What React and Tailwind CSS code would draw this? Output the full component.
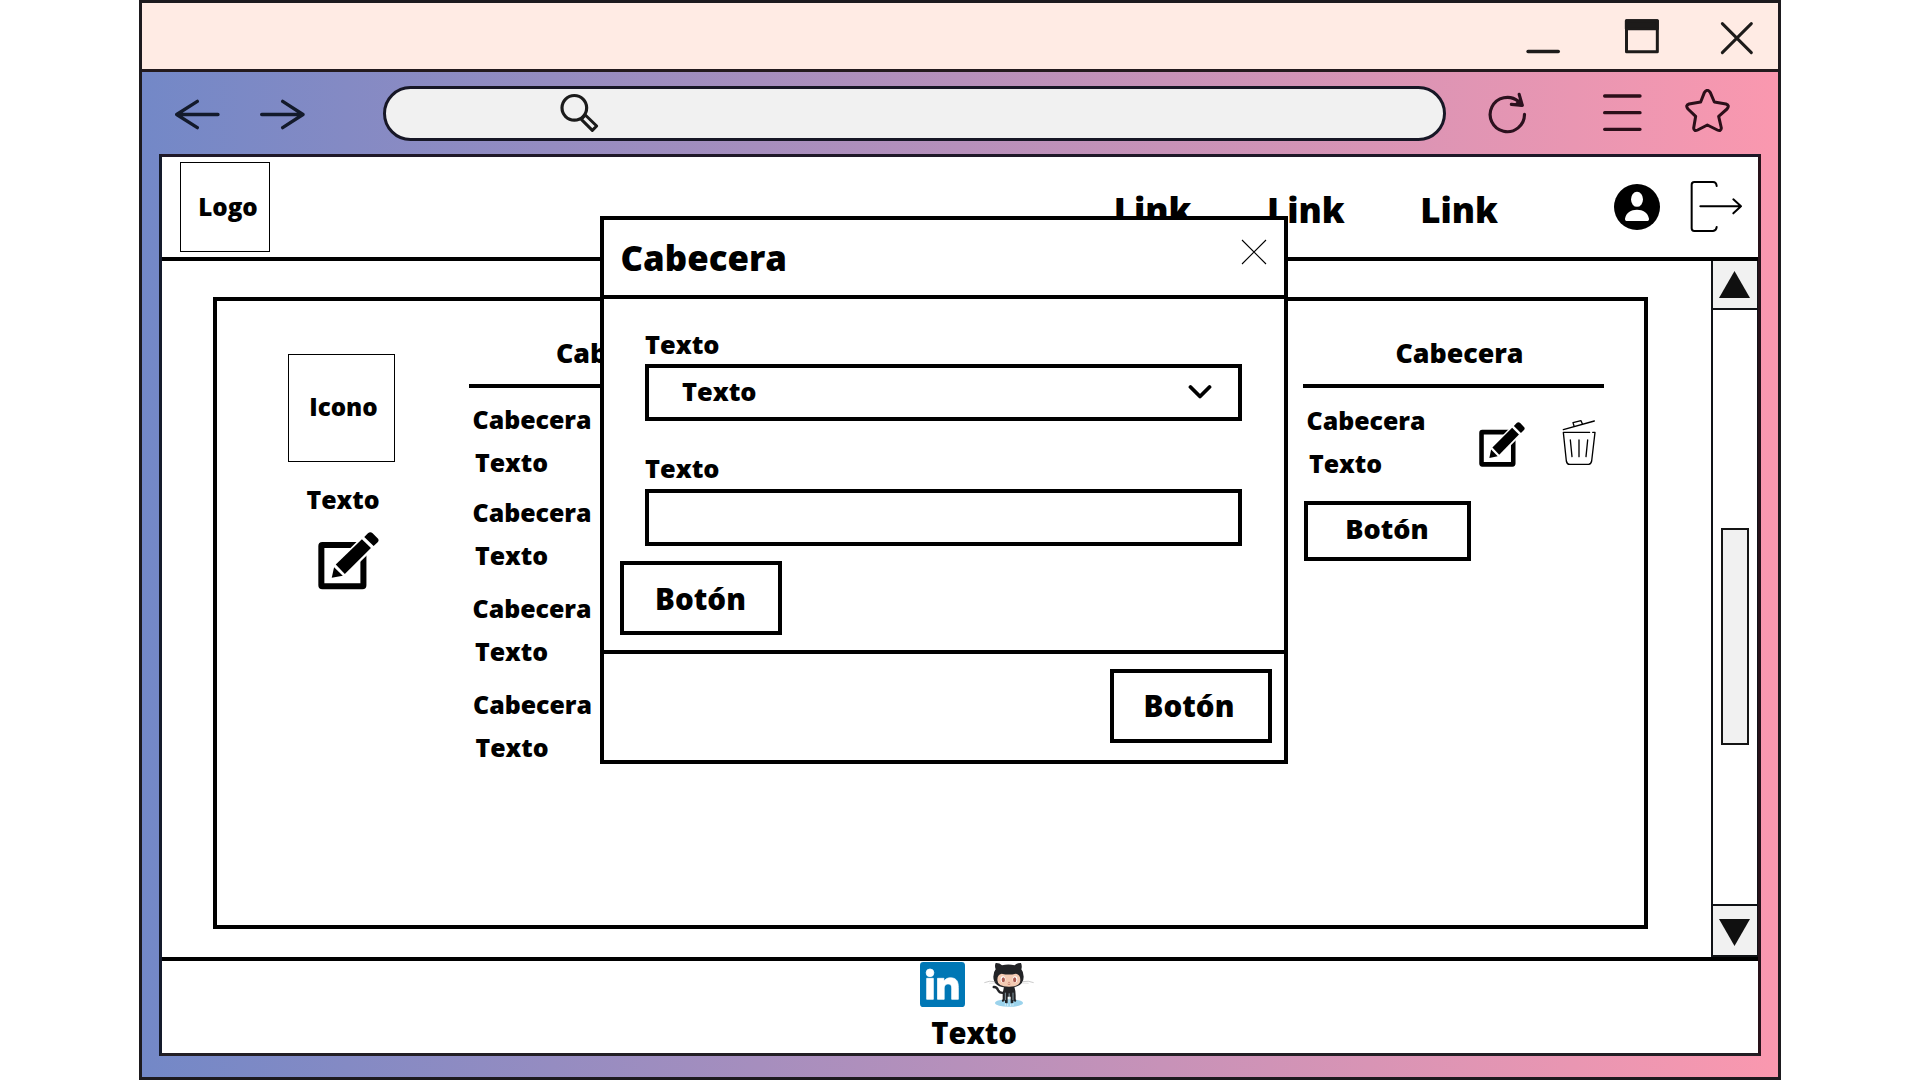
const line = { fill: "none", strokeLinecap: "round", strokeLinejoin: "round" };

function TitleBar() {
  return (
    <div className="flex h-[69px] items-center justify-end border-b-[3px] border-[#231a1d] bg-[#ffebe4] pr-6 text-[#1d1b1a]">
      <svg className="h-[42px] w-[35px]" viewBox="438 45 105 126" stroke="currentColor" strokeWidth="10" {...line}>
        <path d="M444 154.500H535" />
      </svg>
      <svg className="ml-[63px] h-[42px] w-9" viewBox="732 45 108 126" stroke="currentColor" strokeWidth="9" {...line}>
        <rect x="739.500" y="62" width="92.500" height="93" />
        <path d="M739 62H832V86H739Z" fill="currentColor" />
      </svg>
      <svg className="ml-[60px] h-[42px] w-[34px]" viewBox="1020 45 102 126" stroke="currentColor" strokeWidth="9" {...line}>
        <path d="M1027 71L1114 158M1114 71L1027 158" />
      </svg>
    </div>
  );
}

function Toolbar() {
  return (
    <div className="flex h-[82px] shrink-0 items-center">
      <svg className="ml-[33px] h-12 w-[45px] text-[#131a2b]" viewBox="135 267 135 144" stroke="currentColor" strokeWidth="10" {...line}>
        <path d="M140 343.500H264M202 304L140 343.500L202 383" />
      </svg>
      <svg className="ml-10 h-12 w-[45px] text-[#131a2b]" viewBox="390 267 135 144" stroke="currentColor" strokeWidth="10" {...line}>
        <path d="M395 343.500H519M458 304L519 343.500L458 383" />
      </svg>
      <div className="ml-[78px] flex h-[55px] w-[1063px] items-center rounded-full border-[3px] border-[#171726] bg-[#f1f1f1]">
        <svg className="ml-[174px] h-12 w-[39px] text-[#1b1b1b]" viewBox="1290 267 117 144" stroke="currentColor" strokeWidth="9.500" {...line}>
          <circle cx="1333" cy="323.500" r="37" />
          <path d="M1366 345L1400 378L1387 391L1354 358Z" strokeWidth="9" />
        </svg>
      </div>
      <svg className="ml-[42px] h-12 w-[39px] text-[#2b111e]" viewBox="324 267 117 144" stroke="currentColor" strokeWidth="9.500" {...line}>
        <path d="M433.500 343A51.500 51.500 0 1 1 415 304" />
        <path d="M417.500 283L427 316L394 313" />
        <path d="M420 302L425 315L410 312Z" fill="currentColor" />
      </svg>
      <svg className="ml-[75px] h-12 w-10 text-[#2b0f19]" viewBox="666 267 120 144" stroke="currentColor" strokeWidth="10" {...line}>
        <path d="M674 288H780M674 338H780M674 388H780" />
      </svg>
      <svg className="ml-[43px] h-12 w-[45px] text-[#2b0f19]" viewBox="915 267 135 144" stroke="currentColor" strokeWidth="9" {...line}>
        <path d="M973 278Q982 264 991 278L1003 306L1038 312Q1050 316 1041 327L1016 349L1024 384Q1023 395 1012 390L982 375L953 390Q942 395 941 384L947 349L924 327Q915 316 927 312L962 306Z" />
      </svg>
    </div>
  );
}

function EditIcon({ className }) {
  return (
    <svg className={className} viewBox="353 755 182 173" fill="currentColor" preserveAspectRatio="none">
      <rect x="363" y="794" width="125.500" height="124" rx="3" fill="none" stroke="currentColor" strokeWidth="18" />
      <path d="M394 893L401 861L491 770L519 797L427 887Z" fill="#fff" stroke="#fff" strokeWidth="12" />
      <path d="M394 893L401 861L427 887Z" />
      <path d="M406 853L484 777L511 803L433 881Z" />
      <path d="M491 770L502 759Q509 753 516 759L530 773Q537 779 531 786L519 797Z" />
    </svg>
  );
}

function TrashIcon() {
  return (
    <svg className="ml-[37px] mt-[18px] h-[46px] w-[35px]" viewBox="847 390 105 138" stroke="currentColor" strokeWidth="4" {...line}>
      <path d="M851 419L944 393" />
      <path d="M883 408L880 398L904 392L908 401" />
      <path d="M930 427H851L860 513Q862 523 870 523H927Q934 522 936 513L946 427H939" />
      <path d="M872 450L877 500M898 450V500M924 450L919 500" />
    </svg>
  );
}

function UserIcon() {
  return (
    <svg className="ml-[116px] h-[46px] w-[46px]" viewBox="702 552 138 138">
      <circle cx="771" cy="621" r="69" fill="#000" />
      <ellipse cx="771" cy="598" rx="18" ry="22.500" fill="#fff" />
      <path d="M739 663Q734 662 735 656C738 638 753 629 771 629S804 638 807 656Q808 662 803 663Z" fill="#fff" />
    </svg>
  );
}

function LogoutIcon() {
  return (
    <svg className="mb-0.5 ml-[30px] h-[52px] w-[53px]" viewBox="930 540 159 156" stroke="currentColor" strokeWidth="6" {...line}>
      <path d="M1010 558Q1009 546 999 546H943Q935 546 935 554V685Q935 693 943 693H999Q1009 692 1010 681" />
      <path d="M961 618.500H1083M1060 598L1083 618.500L1060 640" />
    </svg>
  );
}

function LinkedInLogo() {
  return (
    <svg className="h-[45px] w-[45px]" viewBox="0 0 24 24">
      <rect width="24" height="24" rx="1.800" fill="#0077b5" />
      <path
        fill="#fff"
        stroke="#fff"
        strokeWidth="0.400"
        d="M20.447 19.900h-3.554v-5.369c0-1.328-.027-2.837-1.852-2.837-1.853 0-2.136 1.445-2.136 2.739v5.467H9.351V8.700h3.414v1.561h.046c.477-.9 1.637-1.850 3.370-1.850 3.601 0 4.267 2.370 4.267 5.255v6.234zM5.337 7.833a2.062 2.062 0 0 1-2.063-2.065 2.064 2.064 0 1 1 2.063 2.065zm1.782 12.067H3.555V8.700h3.564v11.200z"
      />
    </svg>
  );
}

function OctocatLogo() {
  return (
    <svg className="ml-[19px] h-[45px] w-[50px]" viewBox="252 36 150 135">
      <ellipse cx="327" cy="159" rx="42" ry="11.500" fill="#9bd3ec" />
      <path d="M281 111Q290 110 294 120Q299 131 314 128" fill="none" stroke="#222326" strokeWidth="7" strokeLinecap="round" />
      <path d="M312 110H343Q347 122 347 136V148Q351 152 347 155Q341 156 340 150V158Q336 162 332 158V140H323V158Q319 162 315 158V150Q313 156 307 155Q303 152 308 148V130Z" fill="#222326" />
      <path d="M316 128V150M327.500 130V156M339 128V150" stroke="#b9d9e6" strokeWidth="2" />
      <path d="M316 160V167M323 162V168M332 162V168M339 160V167" stroke="#d6eef8" strokeWidth="3" />
      <path d="M287 39Q298 38 306 46Q325 41 344 46Q352 38 363 39Q367 48 364 58Q371 66 371 80Q371 113 326 113Q280 113 280 80Q280 66 287 58Q283 48 287 39Z" fill="#222326" />
      <path d="M305 71Q327 76 347 71Q361 73 361 90Q361 110 327 110Q292 110 292 90Q292 73 305 71Z" fill="#f4cbb3" />
      <ellipse cx="309" cy="88" rx="7" ry="9.500" fill="#fff" />
      <ellipse cx="345" cy="88" rx="7" ry="9.500" fill="#fff" />
      <ellipse cx="310" cy="89" rx="5" ry="7.500" fill="#ad5c51" />
      <ellipse cx="344" cy="89" rx="5" ry="7.500" fill="#ad5c51" />
      <path d="M323 102Q327 105 331 102" fill="none" stroke="#ad5c51" strokeWidth="2" />
      <circle cx="327" cy="97" r="1.700" fill="#ad5c51" />
      <path d="M253 98Q268 91 286 95M401 98Q386 91 367 95" fill="none" stroke="#9a9a9a" strokeWidth="1.600" />
      <path d="M268 100L286 99M386 100L367 99" fill="none" stroke="#b5b5b5" strokeWidth="1.200" />
    </svg>
  );
}

function SiteHeader() {
  return (
    <header className="flex h-[104px] shrink-0 items-center border-b-4 border-black pr-[15px]">
      <div className="-mt-px ml-[18px] flex h-[90px] w-[90px] items-center justify-center border border-black pl-1.5 pt-px text-[24.2px]">
        Logo
      </div>
      <nav className="ml-auto flex gap-[75.4px] pt-1.5 text-[34.8px] leading-10">
        <span>Link</span>
        <span>Link</span>
        <span>Link</span>
      </nav>
      <UserIcon />
      <LogoutIcon />
    </header>
  );
}

function Scrollbar() {
  return (
    <div className="flex w-[47px] flex-col items-center border-l-2 border-r border-[#101216]">
      <div className="flex h-[49px] w-full justify-center border-b-2 border-[#101216] bg-[#f1f1f1] pr-px pt-2.5">
        <svg className="h-[27px] w-[31px]" viewBox="0 0 31 27">
          <path d="M15.500 0L31 27H0Z" fill="#101010" />
        </svg>
      </div>
      <div className="mt-[218px] h-[217px] w-7 border-2 border-[#151515] bg-[#f1f1f1]" />
      <div className="mt-auto flex h-[53px] w-full justify-center border-y-2 border-[#101216] bg-[#f1f1f1] pr-px pt-[13px]">
        <svg className="h-[27px] w-[31px]" viewBox="0 0 31 27">
          <path d="M0 0H31L15.500 27Z" fill="#101010" />
        </svg>
      </div>
    </div>
  );
}

function ColumnHeader({ className }) {
  return <div className={`border-b-4 border-black pb-[11px] pt-8 text-center text-[26.8px] leading-10 ${className}`}>Cabecera</div>;
}

function Entry({ className }) {
  return (
    <div className={`text-[24.9px] leading-9 ${className}`}>
      <div className="pl-[3.500px]">Cabecera</div>
      <div className="mt-[7px] pl-[6px]">Texto</div>
    </div>
  );
}

function Panel() {
  return (
    <section className="ml-[51px] mt-9 flex h-[632px] w-[1435px] items-start border-4 border-black">
      <div className="ml-[71px] mt-[53px] w-[107px] shrink-0">
        <div className="flex h-[108px] items-center justify-center border border-black pb-px pl-1 text-[24.2px]">Icono</div>
        <div className="mt-5 pl-[3px] text-center text-[24.9px] leading-[34px]">Texto</div>
        <EditIcon className="ml-[29.500px] mt-4 h-[57.500px] w-[61px]" />
      </div>
      <div className="ml-[74px] w-[301px] shrink-0">
        <ColumnHeader className="pl-px" />
        <Entry className="mt-[13px]" />
        <Entry className="mt-3.5" />
        <Entry className="mt-[17px]" />
        <Entry className="mt-[17px] pl-[0.500px]" />
      </div>
      <div className="ml-[533px] w-[301px] shrink-0">
        <ColumnHeader className="pl-3" />
        <div className="mt-3.5 flex items-start">
          <Entry className="w-[176px]" />
          <EditIcon className="mt-5 h-[45px] w-[46px]" />
          <TrashIcon />
        </div>
        <div className="ml-px mt-5 flex h-[60px] w-[167px] items-center justify-center border-4 border-black pb-[5px] pr-px text-[27.1px]">
          Botón
        </div>
      </div>
    </section>
  );
}

function Modal() {
  return (
    <div className="absolute left-[600px] top-[216px] flex h-[548px] w-[688px] flex-col border-4 border-black bg-white">
      <div className="flex h-[79px] items-center justify-between border-b-4 border-black pl-[16.500px] pr-[17px] text-[34.8px]">
        <span className="pt-0.5">Cabecera</span>
        <svg className="mb-[11px] h-[26px] w-[26px]" viewBox="0 0 26 26" stroke="#000" strokeWidth="1.100">
          <path d="M1 1L25 25M25 1L1 25" />
        </svg>
      </div>
      <div className="h-[351px] pt-[25px] text-[25.4px]">
        <div className="pl-[41px] leading-10">Texto</div>
        <div className="ml-[41px] flex h-[57px] w-[597px] items-center justify-between border-4 border-black pl-[33px] pr-[26px]">
          <span className="pb-px">Texto</span>
          <svg className="mb-px h-[18px] w-[24px]" viewBox="0 0 24 18" stroke="#000" strokeWidth="3.800" {...line}>
            <path d="M2.500 4L12 13.500L21.500 4" />
          </svg>
        </div>
        <div className="mb-px mt-[27px] pl-[41px] leading-10">Texto</div>
        <div className="ml-[41px] h-[57px] w-[597px] border-4 border-black" />
        <div className="ml-4 mt-[15px] flex h-[74px] w-[162px] items-center justify-center border-4 border-black pr-px pt-0.5 text-[29.5px]">
          Botón
        </div>
      </div>
      <div className="flex flex-1 justify-end border-t-4 border-black pr-3 pt-[15px]">
        <div className="flex h-[74px] w-[162px] items-center justify-center border-4 border-black pr-1 text-[29.5px]">Botón</div>
      </div>
    </div>
  );
}

function Footer() {
  return (
    <footer className="flex flex-1 flex-col items-center border-t-4 border-black pt-px">
      <div className="flex pl-[34px]">
        <LinkedInLogo />
        <OctocatLogo />
      </div>
      <div className="mt-1.5 pl-7 text-[29.2px] leading-10">Texto</div>
    </footer>
  );
}

export default function App() {
  return (
    <div className="relative h-[1080px] w-[1920px] overflow-hidden bg-white font-['Open_Sans',sans-serif] font-extrabold leading-none text-black">
      <div className="mx-auto flex h-full w-[1642px] flex-col border-[3px] border-[#1d1a1e] bg-[linear-gradient(90deg,#7388c7,#fa98af)]">
        <TitleBar />
        <Toolbar />
        <div className="mx-[17px] mb-[21px] flex flex-1 flex-col border-[3px] border-b-[#221e24] border-l-[#141a2b] border-r-[#28121a] border-t-[#1f1828] bg-white">
          <SiteHeader />
          <main className="flex h-[696px] shrink-0 justify-between">
            <Panel />
            <Scrollbar />
          </main>
          <Footer />
        </div>
      </div>
      <Modal />
    </div>
  );
}
